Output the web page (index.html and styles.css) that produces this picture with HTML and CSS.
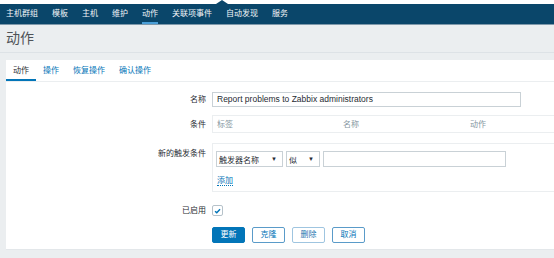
FILE: index.html
```html
<!DOCTYPE html>
<html lang="zh">
<head>
<meta charset="utf-8">
<title>动作</title>
<link rel="stylesheet" href="styles.css">
</head>
<body>
<div class="topstrip"><span class="pointer"></span></div>
<nav class="nav">
  <a class="nav-item">主机群组</a>
  <a class="nav-item">模板</a>
  <a class="nav-item">主机</a>
  <a class="nav-item">维护</a>
  <a class="nav-item active">动作</a>
  <a class="nav-item">关联项事件</a>
  <a class="nav-item">自动发现</a>
  <a class="nav-item">服务</a>
</nav>
<header class="header"><h1 class="title">动作</h1></header>
<main class="panel">
  <div class="tabs">
    <span class="tab active">动作</span>
    <span class="tab">操作</span>
    <span class="tab">恢复操作</span>
    <span class="tab">确认操作</span>
  </div>
  <form class="form">
    <div class="row row-name">
      <label class="label">名称</label>
      <div class="field"><div class="input input-name">Report problems to Zabbix administrators</div></div>
    </div>
    <div class="row row-cond">
      <label class="label">条件</label>
      <div class="cond-table">
        <span class="th">标签</span>
        <span class="th">名称</span>
        <span class="th">动作</span>
      </div>
    </div>
    <div class="row row-new">
      <label class="label label-top">新的触发条件</label>
      <div class="new-box">
        <div class="controls">
          <div class="select select-type"><span>触发器名称</span><span class="arrow">▼</span></div>
          <div class="select select-op"><span>似</span><span class="arrow">▼</span></div>
          <div class="input input-value"></div>
        </div>
        <div class="add-line"><a class="link-action">添加</a></div>
      </div>
    </div>
    <div class="row row-enabled">
      <label class="label">已启用</label>
      <div class="field">
        <span class="checkbox">
          <svg viewBox="0 0 10 10" width="10" height="10"><path d="M2.3 5.2 L4.2 7 L7.8 3" fill="none" stroke="#0275b8" stroke-width="1.6"/></svg>
        </span>
      </div>
    </div>
    <div class="row row-buttons">
      <span></span>
      <div class="buttons">
        <button type="button" class="btn btn-primary">更新</button>
        <button type="button" class="btn btn-alt">克隆</button>
        <button type="button" class="btn btn-alt btn-light">删除</button>
        <button type="button" class="btn btn-alt">取消</button>
      </div>
    </div>
  </form>
</main>
</body>
</html>
```
FILE: styles.css
```css
html, body {
  margin: 0;
  padding: 0;
  overflow: hidden;
}
body {
  background: #ebeef0;
  font-family: "Liberation Sans", "Noto Sans CJK SC", sans-serif;
  font-size: 8px;
  color: #1f2c33;
  width: 554px;
  height: 258px;
}
.topstrip {
  height: 4px;
  background: #ffffff;
  position: relative;
}
.pointer {
  position: absolute;
  left: 216px;
  bottom: 0;
  width: 0;
  height: 0;
  border-left: 6px solid transparent;
  border-right: 6px solid transparent;
  border-bottom: 4px solid #0a466a;
}
.nav {
  height: 20px;
  background: #0a466a;
  border-bottom: 1px solid #7f99ab;
  display: flex;
  gap: 14px;
  padding-left: 6px;
}
.nav-item {
  color: #f2f5f7;
  line-height: 20px;
  height: 20px;
  box-sizing: border-box;
}
.nav-item.active {
  box-shadow: inset 0 -2px 0 #4a9fd8;
}
.header {
  height: 27px;
  border-bottom: 1px solid #dde2e6;
  padding-left: 6px;
}
.title {
  margin: 0;
  font-size: 14px;
  font-weight: normal;
  line-height: 27px;
  color: #4f5357;
}
.panel {
  display: block;
  margin: 7px 0 0 6px;
  background: #ffffff;
  border-bottom: 1px solid #e3e7ea;
  height: 190px;
  box-sizing: border-box;
}
.tabs {
  display: flex;
  height: 21px;
  border-bottom: 1px solid #ebeef0;
}
.tab {
  padding: 0 7px;
  line-height: 21px;
  height: 21px;
  color: #0275b8;
  box-sizing: border-box;
}
.tab.active {
  color: #1f2c33;
  box-shadow: inset 0 -2px 0 #0275b8;
}
.form {
  padding-top: 10px;
}
.row {
  display: grid;
  grid-template-columns: 200px 1fr;
  column-gap: 6px;
}
.row-name { margin-bottom: 8px; }
.row-cond { margin-bottom: 10px; }
.row-new { margin-bottom: 13px; }
.row-enabled { margin-bottom: 11px; }
.label {
  text-align: right;
  align-self: center;
  line-height: 11px;
  color: #1f2c33;
}
.label-top {
  align-self: start;
  padding-top: 5px;
}
.field {
  display: flex;
  align-items: center;
}
.input {
  box-sizing: border-box;
  height: 15px;
  border: 1px solid #c9d1d6;
  background: #ffffff;
  padding-left: 4px;
  line-height: 13px;
  white-space: nowrap;
}
.input-name {
  width: 309px;
  font-size: 8.5px;
}
.cond-table {
  box-sizing: border-box;
  height: 18px;
  border: 1px solid #ebeef0;
  border-right: 0;
  display: grid;
  grid-template-columns: 126px 127px 1fr;
  padding-left: 4px;
  align-items: center;
}
.th {
  color: #8597a1;
  line-height: 11px;
}
.new-box {
  box-sizing: border-box;
  height: 49px;
  border: 1px solid #ebeef0;
  border-right: 0;
  padding: 7px 3px 0;
}
.controls {
  display: flex;
  gap: 3px;
}
.select {
  box-sizing: border-box;
  height: 16px;
  border: 1px solid #c9d1d6;
  display: flex;
  align-items: center;
  justify-content: space-between;
  padding: 0 5px 0 2px;
  color: #1f2c33;
}
.select-type { width: 67px; }
.select-op { width: 34px; }
.arrow {
  font-size: 6px;
  color: #1f2c33;
}
.input-value {
  width: 183px;
  height: 16px;
}
.add-line {
  margin-top: 9px;
  line-height: 10px;
  padding-left: 1px;
}
.link-action {
  color: #0275b8;
  border-bottom: 1px dotted #0275b8;
}
.checkbox {
  box-sizing: border-box;
  width: 11px;
  height: 11px;
  border: 1px solid #b6c2ca;
  border-radius: 2px;
  display: flex;
  align-items: center;
  justify-content: center;
  background: #ffffff;
}
.checkbox svg {
  display: block;
}
.buttons {
  display: flex;
  gap: 7px;
}
.btn {
  box-sizing: border-box;
  height: 16px;
  padding: 0 7.5px;
  font-family: "Liberation Sans", "Noto Sans CJK SC", sans-serif;
  font-size: 8px;
  line-height: 14px;
  border-radius: 2px;
  cursor: pointer;
}
.btn-primary {
  background: #0275b8;
  border: 1px solid #0275b8;
  color: #ffffff;
}
.btn-alt {
  background: #ffffff;
  border: 1px solid #5a9bc9;
  color: #0275b8;
}
.btn-light {
  border-color: #9fc5e0;
  color: #1f74b0;
}
```
